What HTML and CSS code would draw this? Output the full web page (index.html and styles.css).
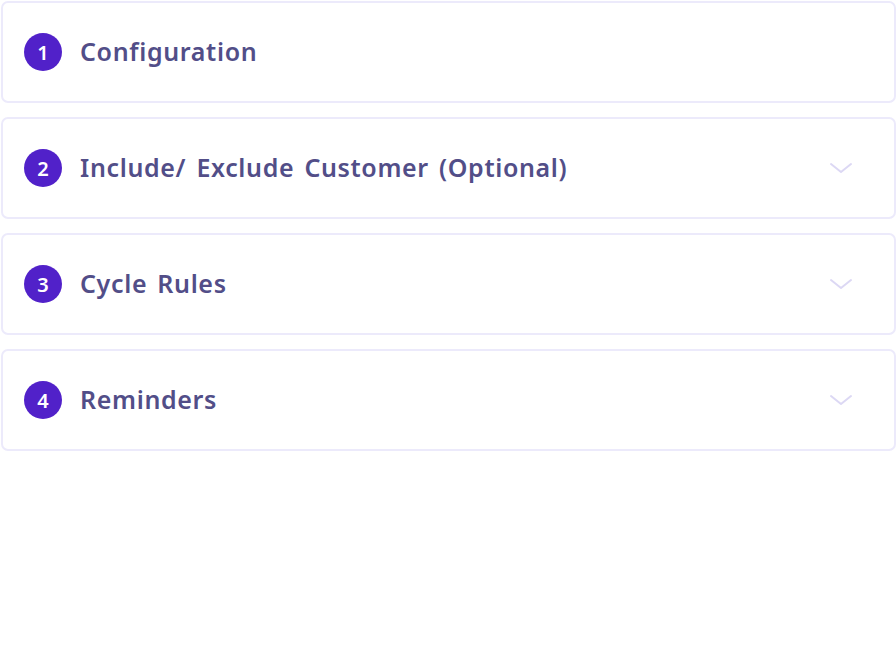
FILE: index.html
```html
<!DOCTYPE html>
<html>
<head>
<meta charset="utf-8">
<link rel="stylesheet" href="styles.css">
</head>
<body>
<div class="steps">
  <div class="card">
    <span class="num">1</span>
    <span class="title">Configuration</span>
  </div>
  <div class="card">
    <span class="num">2</span>
    <span class="title">Include/ Exclude Customer (Optional)</span>
    <svg class="chev" viewBox="0 0 24 12" width="24" height="12"><path d="M2 2 L12 10 L22 2" fill="none" stroke="#dcd8f4" stroke-width="2" stroke-linecap="round" stroke-linejoin="round"/></svg>
  </div>
  <div class="card">
    <span class="num">3</span>
    <span class="title">Cycle Rules</span>
    <svg class="chev" viewBox="0 0 24 12" width="24" height="12"><path d="M2 2 L12 10 L22 2" fill="none" stroke="#dcd8f4" stroke-width="2" stroke-linecap="round" stroke-linejoin="round"/></svg>
  </div>
  <div class="card">
    <span class="num">4</span>
    <span class="title">Reminders</span>
    <svg class="chev" viewBox="0 0 24 12" width="24" height="12"><path d="M2 2 L12 10 L22 2" fill="none" stroke="#dcd8f4" stroke-width="2" stroke-linecap="round" stroke-linejoin="round"/></svg>
  </div>
</div>
</body>
</html>
```
FILE: styles.css
```css
html, body {
  margin: 0;
  padding: 0;
  background: #ffffff;
}
.steps {
  padding: 1px 0 0 1px;
  display: flex;
  flex-direction: column;
  gap: 14px;
  width: 895px;
}
.card {
  box-sizing: border-box;
  height: 102px;
  border: 2px solid #eceafb;
  border-radius: 7px;
  display: flex;
  align-items: center;
  padding: 0 41px 0 21px;
}
.num {
  width: 38px;
  height: 38px;
  border-radius: 50%;
  background: #5121c9;
  color: #ffffff;
  display: flex;
  align-items: center;
  justify-content: center;
  font-family: "Noto Sans", sans-serif;
  font-size: 20px;
  font-weight: 600;
  flex-shrink: 0;
}
.title {
  margin-left: 18px;
  margin-top: -2px;
  font-family: "Noto Sans", sans-serif;
  font-size: 25px;
  font-weight: 600;
  letter-spacing: 0.65px;
  word-spacing: 3px;
  color: #524e88;
  flex: 1;
}
.chev {
  flex-shrink: 0;
}
```
